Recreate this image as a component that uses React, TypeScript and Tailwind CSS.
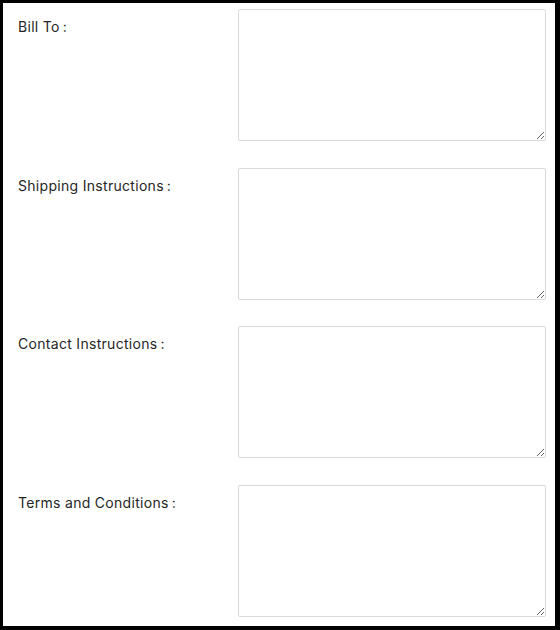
import React from "react";

const rows = [
  { label: "Bill To", mb: "mb-[27px]" },
  { label: "Shipping Instructions", mb: "mb-[26px]" },
  { label: "Contact Instructions", mb: "mb-[27px]" },
  { label: "Terms and Conditions", mb: "mb-0" },
];

export default function App() {
  return (
    <div className="w-[560px] h-[630px] bg-black pt-[3px] pl-[3px] pr-[5px] pb-[4px]">
      <div
        className="w-full h-full bg-white pt-[6px] pl-[15px] pr-[9px]"
        style={{ fontFamily: "Inter, 'Liberation Sans', sans-serif" }}
      >
        {rows.map((r) => (
          <div key={r.label} className={`flex ${r.mb}`}>
            <label className="w-[220px] shrink-0 pt-[7px] text-[14px] leading-[22px] tracking-[0.3px] text-[#262626]">
              {r.label}
              <span className="ml-[3px]">:</span>
            </label>
            <textarea className="w-[308px] h-[132px] border border-[#d9d9d9] rounded-[2px] bg-white outline-none" />
          </div>
        ))}
      </div>
    </div>
  );
}
